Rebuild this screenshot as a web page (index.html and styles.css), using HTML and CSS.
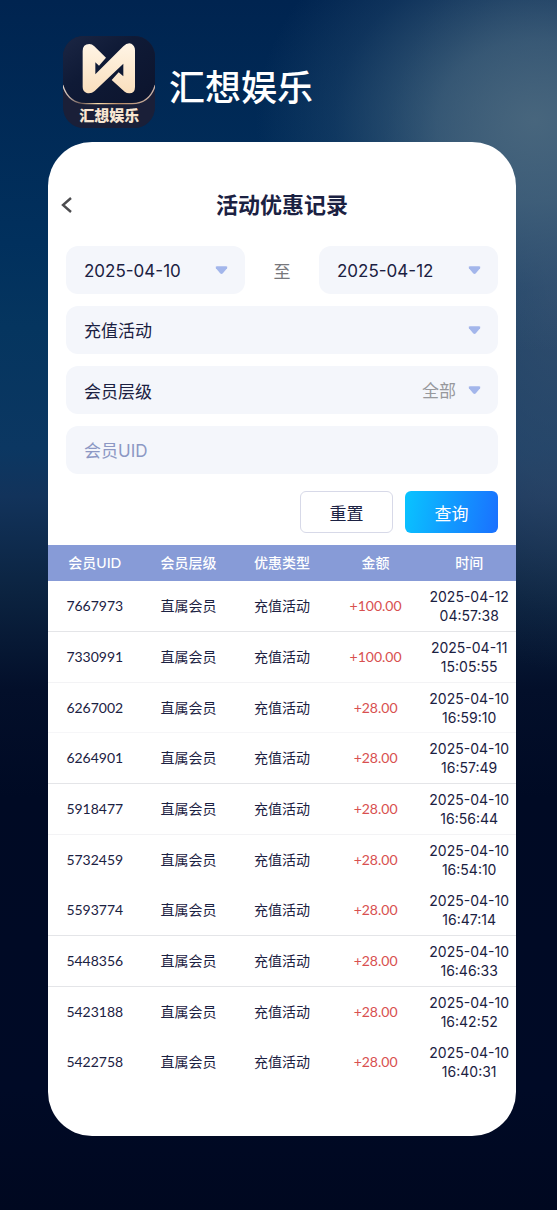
FILE: index.html
```html
<!DOCTYPE html>
<html lang="zh-CN">
<head>
<meta charset="utf-8">
<meta name="viewport" content="width=device-width, initial-scale=1">
<title>活动优惠记录</title>
<link rel="stylesheet" href="styles.css">
</head>
<body>
<div class="desktop">
  <header class="app">
    <svg class="app-icon" viewBox="39 33 276 276" role="img" aria-label="汇想娱乐">
      <defs>
        <linearGradient id="gold" x1="0" y1="0" x2="0" y2="1">
          <stop offset="0" stop-color="#fff5e6"/><stop offset="1" stop-color="#fadfbd"/>
        </linearGradient>
        <linearGradient id="night" x1="0" y1="0" x2="1" y2="1">
          <stop offset="0" stop-color="#1b2644"/><stop offset=".4" stop-color="#0f1a36"/><stop offset="1" stop-color="#0c142d"/>
        </linearGradient>
        <linearGradient id="rim" x1="0" y1="0" x2="1" y2="0">
          <stop offset="0" stop-color="#e8d8cd"/><stop offset=".2" stop-color="#6f5a55"/><stop offset=".38" stop-color="#ffe0ae"/><stop offset=".6" stop-color="#b98c66"/><stop offset="1" stop-color="#c9b4ac"/>
        </linearGradient>
        <clipPath id="tile"><rect x="39" y="33" width="276" height="276" rx="62"/></clipPath>
      </defs>
      <g clip-path="url(#tile)">
        <rect x="39" y="33" width="276" height="276" fill="#1a1f38"/>
        <path d="M39 33H315V182C304 216 284 236 246 236H108C70 236 50 216 39 182Z" fill="url(#night)"/>
        <path d="M38 180C49 216 70 236 108 236H246C284 236 305 216 316 180" fill="none" stroke="url(#rim)" stroke-width="4"/>
      </g>
      <path fill="url(#gold)" d="M98 78Q98 57 118 57Q126 57 133 64L168 98L147 122L136 112V148L220 64Q232 52 244 56Q255 62 255 76V186Q255 205 238 205Q230 205 224 200L185 165L206 142L220 154V116L134 198Q124 207 110 204Q98 199 98 186Z"/>
      <text class="app-icon-text" x="178" y="289" text-anchor="middle">汇想娱乐</text>
    </svg>
    <span class="app-name">汇想娱乐</span>
  </header>

  <main class="card">
    <div class="nav">
      <button class="back" type="button" aria-label="返回">
        <svg viewBox="0 0 12 18" width="12" height="18"><path d="M10 2L2 9L10 16" fill="none" stroke="#4c4c4f" stroke-width="2.4"/></svg>
      </button>
      <h1 class="title">活动优惠记录</h1>
    </div>

    <form class="filters">
      <div class="range">
        <div class="field">
          <input class="control" type="text" value="2025-04-10" aria-label="开始日期" readonly>
          <svg class="caret" viewBox="0 0 14 9"><path d="M2 0H12Q14 0 13 2L8.500 7.500Q7 9 5.500 7.500L1 2Q0 0 2 0Z"/></svg>
        </div>
        <span class="to">至</span>
        <div class="field">
          <input class="control" type="text" value="2025-04-12" aria-label="结束日期" readonly>
          <svg class="caret" viewBox="0 0 14 9"><path d="M2 0H12Q14 0 13 2L8.500 7.500Q7 9 5.500 7.500L1 2Q0 0 2 0Z"/></svg>
        </div>
      </div>
      <div class="field">
        <select class="control" aria-label="活动类型"><option>充值活动</option></select>
        <svg class="caret" viewBox="0 0 14 9"><path d="M2 0H12Q14 0 13 2L8.500 7.500Q7 9 5.500 7.500L1 2Q0 0 2 0Z"/></svg>
      </div>
      <div class="field">
        <label class="field-label" for="level">会员层级</label>
        <select class="control control-end" id="level"><option>全部</option></select>
        <svg class="caret" viewBox="0 0 14 9"><path d="M2 0H12Q14 0 13 2L8.500 7.500Q7 9 5.500 7.500L1 2Q0 0 2 0Z"/></svg>
      </div>
      <div class="field">
        <input class="control" type="text" placeholder="会员UID" aria-label="会员UID">
      </div>
      <div class="actions">
        <button class="btn" type="reset">重置</button>
        <button class="btn btn-primary" type="button">查询</button>
      </div>
    </form>

    <table class="records">
      <thead>
        <tr><th>会员UID</th><th>会员层级</th><th>优惠类型</th><th>金额</th><th>时间</th></tr>
      </thead>
      <tbody>
        <tr><td>7667973</td><td>直属会员</td><td>充值活动</td><td class="amount">+100.00</td><td class="time">2025-04-12<br>04:57:38</td></tr>
        <tr><td>7330991</td><td>直属会员</td><td>充值活动</td><td class="amount">+100.00</td><td class="time">2025-04-11<br>15:05:55</td></tr>
        <tr><td>6267002</td><td>直属会员</td><td>充值活动</td><td class="amount">+28.00</td><td class="time">2025-04-10<br>16:59:10</td></tr>
        <tr><td>6264901</td><td>直属会员</td><td>充值活动</td><td class="amount">+28.00</td><td class="time">2025-04-10<br>16:57:49</td></tr>
        <tr><td>5918477</td><td>直属会员</td><td>充值活动</td><td class="amount">+28.00</td><td class="time">2025-04-10<br>16:56:44</td></tr>
        <tr><td>5732459</td><td>直属会员</td><td>充值活动</td><td class="amount">+28.00</td><td class="time">2025-04-10<br>16:54:10</td></tr>
        <tr><td>5593774</td><td>直属会员</td><td>充值活动</td><td class="amount">+28.00</td><td class="time">2025-04-10<br>16:47:14</td></tr>
        <tr><td>5448356</td><td>直属会员</td><td>充值活动</td><td class="amount">+28.00</td><td class="time">2025-04-10<br>16:46:33</td></tr>
        <tr><td>5423188</td><td>直属会员</td><td>充值活动</td><td class="amount">+28.00</td><td class="time">2025-04-10<br>16:42:52</td></tr>
        <tr><td>5422758</td><td>直属会员</td><td>充值活动</td><td class="amount">+28.00</td><td class="time">2025-04-10<br>16:40:31</td></tr>
      </tbody>
    </table>
  </main>
</div>
</body>
</html>
```
FILE: styles.css
```css
* { box-sizing: border-box; }

body {
  margin: 0;
  font-family: Lato, "Noto Sans CJK SC", sans-serif;
  color: #1b2142;
}

.desktop {
  min-height: 100vh;
  padding: 36px 41px 74px 48px;
  background:
    radial-gradient(ellipse 50% 230px at 96% 10%, rgba(76, 106, 128, .9) 0%, rgba(72, 104, 128, .7) 35%, rgba(60, 95, 125, .25) 72%, rgba(40, 80, 115, 0) 100%),
    radial-gradient(ellipse 34% 380px at 100% 24%, rgba(76, 92, 118, .6) 0%, rgba(70, 88, 114, .42) 50%, rgba(50, 75, 105, .1) 85%, rgba(50, 75, 105, 0) 100%),
    linear-gradient(180deg, #002450 0%, #01305d 20%, #05355f 27%, #0b3762 37%, #12335b 41%, #0b2340 49%, #030f2a 57%, #000a24 66%, #000a26 90%, #000820 100%);
}

.app {
  display: flex;
  align-items: center;
  gap: 14px;
  padding-left: 15px;
  margin-bottom: 14px;
}
.app-icon { width: 92px; height: 92px; flex: none; }
.app-icon-text {
  font-family: "Noto Sans CJK SC", sans-serif;
  font-size: 45px;
  font-weight: 900;
  fill: #f8e6d2;
}
.app-name {
  font-size: 36px;
  line-height: 48px;
  font-weight: 500;
  color: #fff;
  padding-top: 10px;
}

.card {
  background: #fff;
  border-radius: 44px;
  padding: 40px 0 49px;
  overflow: hidden;
}

.nav {
  display: grid;
  grid-template-columns: 40px 1fr 40px;
  align-items: center;
  height: 46px;
}
.back {
  display: flex;
  padding: 0 0 0 13px;
  border: 0;
  background: none;
}
.title {
  margin: 0;
  font-size: 22px;
  line-height: 32px;
  font-weight: 600;
  text-align: center;
}

.filters {
  display: flex;
  flex-direction: column;
  gap: 12px;
  padding: 18px 18px 12px;
}
.range {
  display: grid;
  grid-template-columns: 1fr 74px 1fr;
  align-items: center;
}
.to {
  font-size: 17px;
  color: #77777b;
  text-align: center;
}
.field {
  position: relative;
  display: flex;
  align-items: center;
  height: 48px;
  background: #f4f6fb;
  border-radius: 12px;
}
.field-label {
  padding-left: 18px;
  font-size: 17px;
  white-space: nowrap;
}
.control {
  flex: 1;
  min-width: 0;
  width: 100%;
  height: 100%;
  padding: 2px 18px 0;
  border: 0;
  border-radius: 12px;
  background: none;
  color: inherit;
  font-family: Inter, "Noto Sans CJK SC", sans-serif;
  font-size: 17px;
  appearance: none;
  opacity: 1;
}
.control::placeholder { color: #8c98c4; opacity: 1; }
.control-end {
  padding-right: 42px;
  color: #97989c;
  text-align: right;
  text-align-last: right;
}
.caret {
  position: absolute;
  right: 17px;
  top: 20px;
  width: 13px;
  height: 9px;
  fill: #a3b6eb;
  pointer-events: none;
}

.actions {
  display: flex;
  justify-content: flex-end;
  gap: 12px;
  padding-top: 5px;
}
.btn {
  width: 93px;
  height: 42px;
  border: 1px solid #d7d9e8;
  border-radius: 6px;
  background: #fff;
  color: #1b2142;
  font-family: "Noto Sans CJK SC", sans-serif;
  font-size: 17px;
}
.btn-primary {
  border: 0;
  background: linear-gradient(100deg, #09c4ff, #1a70ff);
  color: #fff;
}

.records {
  width: 100%;
  table-layout: fixed;
  border-collapse: separate;
  border-spacing: 0;
  font-size: 14px;
  line-height: 19px;
  text-align: center;
}
.records th {
  height: 36px;
  padding: 0 0 2px;
  background: #879bd7;
  color: #fff;
  font-weight: 500;
}
.records td {
  padding: 5px 0 7px;
  border-bottom: 1px solid #e4e5e8;
  white-space: nowrap;
}
.records tr:nth-child(3n+2) td { border-bottom-color: #f3f3f5; }
.records tr:nth-child(8) td { border-bottom-color: #e4e5e8; }
.records tr:nth-child(3n) td,
.records tr:last-child td { border-bottom: 0; }
.records tr:nth-child(3) td { box-shadow: inset 0 -1px #f6f6f8; }
.records .amount { color: #d8504f; }
.records td.time {
  padding: 6px 0;
  font-family: Inter, sans-serif;
}
```
